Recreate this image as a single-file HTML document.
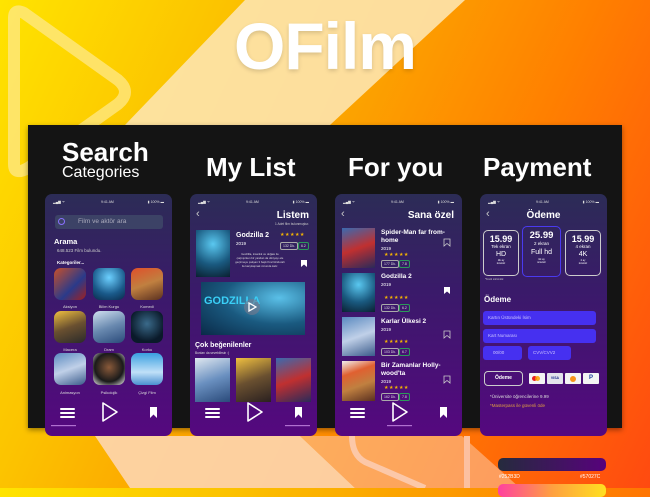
<!DOCTYPE html>
<html><head><meta charset="utf-8"><style>
*{margin:0;padding:0;box-sizing:border-box}
body{width:650px;height:488px;overflow:hidden;position:relative;font-family:"Liberation Sans",sans-serif;background:linear-gradient(115deg,#ffe400 0%,#fcc400 25%,#fca400 45%,#ff8000 68%,#ff4a10 100%)}
.a{position:absolute}
.w{color:#fff}
.ph{position:absolute;top:194px;width:127px;height:242px;border-radius:7px;background:linear-gradient(180deg,#2c2c56 0%,#3a1a6a 40%,#55087f 100%);overflow:hidden;color:#fff}
.st{position:absolute;top:6px;left:0;width:100%;font-size:3.5px;color:#ddd}
.t{position:absolute;white-space:nowrap}
.tile{position:absolute;width:32px;height:32px;border-radius:7px}
.lbl{position:absolute;font-size:4px;color:#ddd;width:40px;text-align:center}
.bdg{position:absolute;font-size:3.5px;border:0.6px solid #aaa;border-radius:2px;padding:1px 2px;color:#ddd}
.bdg.g{border-color:#2c9a5a}
.stars{position:absolute;font-size:5px;color:#f5b400;letter-spacing:0.5px}
.inp{position:absolute;background:#4630f0;border-radius:3px;font-size:4.5px;color:#c8c0ff;padding:4px 0 0 5px}
.plan{position:absolute;border:1.3px solid #ccc;border-radius:5px;text-align:center;color:#fff}
</style></head><body>
<svg class="a" style="left:0;top:0" width="650" height="488">
<polygon points="245,0 465,0 330,125 125,125" fill="#fde4ae" opacity="0.9"/>
<polygon points="95,436 300,436 355,488 130,488" fill="#fdd6b0" opacity="0.9"/>
<polygon points="300,436 462,436 520,488 355,488" fill="#fbc29a" opacity="0.6"/>
<path d="M14,18 Q14,8 24,13 L118,80 Q132,92 118,104 L28,168 Q14,176 14,164 Z" stroke="#fde88a" stroke-width="12" fill="none" stroke-linejoin="round" opacity="0.75"/>
<path d="M352,436 Q352,455 365,462 L425,488" stroke="#fcc8a8" stroke-width="6" fill="none"/>
<rect x="464" y="436" width="6" height="52" fill="#fcc0a0"/>
</svg>
<div class="a w" style="left:0;top:8px;width:650px;text-align:center;font-size:66px;font-weight:bold;text-shadow:0 2px 4px rgba(0,0,0,0.15);letter-spacing:-1px">OFilm</div>
<div class="a" style="left:28px;top:125px;width:594px;height:303px;background:#141414;box-shadow:0 2px 5px rgba(0,0,0,0.4)"></div>
<div class="a w" style="left:62px;top:138px;font-size:26px;line-height:28px;font-weight:bold">Search</div>
<div class="a w" style="left:62px;top:164px;font-size:16px;line-height:18px">Categories</div>
<div class="a w" style="left:206px;top:152px;font-size:26px;font-weight:bold">My List</div>
<div class="a w" style="left:348px;top:152px;font-size:26px;font-weight:bold">For you</div>
<div class="a w" style="left:483px;top:152px;font-size:26px;font-weight:bold">Payment</div>

<!-- Phone 1 -->
<div class="ph" style="left:45px">
<div class="st"><span style="position:absolute;left:8px">▂▄▆ ᯤ</span><span style="position:absolute;left:56px">9:41 AM</span><span style="position:absolute;right:8px">▮ 100% ▬</span></div>
<div class="a" style="left:10px;top:21px;width:108px;height:14px;background:#3c4266;border-radius:3px"></div>
<div class="a" style="left:13px;top:24px;width:7px;height:7px;border:1.3px solid #8a70ff;border-radius:50%"></div>
<div class="t" style="left:33px;top:24px;font-size:6.5px;color:#aab">Film ve aktör ara</div>
<div class="t" style="left:9px;top:43px;font-size:7.5px;font-weight:bold">Arama</div>
<div class="t" style="left:12px;top:54px;font-size:4.5px;color:#ccc">648.523 Film bulundu.</div>
<div class="t" style="left:12px;top:66px;font-size:4.5px;font-weight:bold">Kategoriler...</div>
<div class="tile" style="left:9px;top:74px;background:linear-gradient(135deg,#c8502a,#2a3a8a 60%,#a02020)"></div>
<div class="tile" style="left:48px;top:74px;background:radial-gradient(circle at 50% 30%,#6cd0ff,#1a5a8a 60%,#0a2a4a)"></div>
<div class="tile" style="left:86px;top:74px;background:linear-gradient(160deg,#e0502a,#c08040 50%,#5a3020)"></div>
<div class="lbl" style="left:5px;top:110px">Aksiyon</div><div class="lbl" style="left:44px;top:110px">Bilim Kurgu</div><div class="lbl" style="left:82px;top:110px">Komedi</div>
<div class="tile" style="left:9px;top:117px;background:linear-gradient(160deg,#f0c040,#6a5030 50%,#2a2a2a)"></div>
<div class="tile" style="left:48px;top:117px;background:linear-gradient(160deg,#d0e0f0,#6a8ab0 50%,#2a4a7a)"></div>
<div class="tile" style="left:86px;top:117px;background:radial-gradient(circle at 50% 40%,#3a6a8a,#0a1a2a 70%)"></div>
<div class="lbl" style="left:5px;top:153px">Macera</div><div class="lbl" style="left:44px;top:153px">Dram</div><div class="lbl" style="left:82px;top:153px">Korku</div>
<div class="tile" style="left:9px;top:159px;background:linear-gradient(160deg,#5a8ac0,#c0d0e8 50%,#3a5a8a)"></div>
<div class="tile" style="left:48px;top:159px;background:radial-gradient(circle at 50% 45%,#8a5a3a,#1a1a1a 60%,#f0f0f0)"></div>
<div class="tile" style="left:86px;top:159px;background:linear-gradient(180deg,#3aa0e0,#c0e0f8 60%,#4a90d0)"></div>
<div class="lbl" style="left:5px;top:196px">Animasyon</div><div class="lbl" style="left:44px;top:196px">Psikolojik</div><div class="lbl" style="left:82px;top:196px">Çizgi Film</div>
<svg class="a" style="left:0;top:205px" width="127" height="37"><g fill="#fff"><rect x="15" y="9" width="15" height="2" rx="1"/><rect x="15" y="13" width="15" height="2" rx="1"/><rect x="15" y="17" width="15" height="2" rx="1"/></g><path d="M58,4 L58,22 L72,13 Z" stroke="#fff" stroke-width="1.6" fill="none" stroke-linejoin="round"/><path d="M105,8 L112,8 L112,19 L108.5,15.5 L105,19 Z" fill="#fff"/><rect x="6" y="26" width="25" height="1.2" fill="#b070d0"/></svg>
</div>

<!-- Phone 2 -->
<div class="ph" style="left:190px">
<div class="st"><span style="position:absolute;left:8px">▂▄▆ ᯤ</span><span style="position:absolute;left:56px">9:41 AM</span><span style="position:absolute;right:8px">▮ 100% ▬</span></div>
<div class="t" style="left:6px;top:14px;font-size:11px;color:#ccc">‹</div>
<div class="t" style="right:8px;top:16px;font-size:10px;font-weight:bold">Listem</div>
<div class="t" style="right:8px;top:28px;font-size:3.2px;color:#ccc">1 Adet film bulunmuştur.</div>
<div class="a" style="left:6px;top:36px;width:34px;height:47px;background:radial-gradient(circle at 50% 30%,#5ac8f0,#1a5a80 55%,#0a2030)"></div>
<div class="t" style="left:46px;top:38px;font-size:7px;font-weight:bold">Godzilla 2</div>
<div class="t" style="left:46px;top:47px;font-size:4.5px">2019</div>
<div class="stars" style="left:90px;top:38px">★★★★★</div>
<div class="bdg" style="left:90px;top:48px">132 Dk.</div><div class="bdg g" style="left:108px;top:48px">6.2</div>
<div class="a" style="left:45px;top:58px;width:50px;font-size:2.8px;line-height:4px;color:#ddd;text-align:center">Godzilla, insanlık ve doğası ile çarpışırken bir yandan da dünyayı ele geçirmeye çalışan 3 başlı Kral Ghidorah ile karşılaşmak zorunda kalır.</div>
<svg class="a" style="left:110px;top:65px" width="8" height="9"><path d="M1,1 L7,1 L7,8 L4,5.5 L1,8 Z" fill="#fff"/></svg>
<div class="a" style="left:11px;top:88px;width:104px;height:53px;background:radial-gradient(ellipse at 75% 30%,#5ac0e8,#1a5a80 50%,#0a2a48)"></div>
<div class="t" style="left:14px;top:101px;font-size:11px;font-weight:bold;color:#3ad0f8">GODZILLA</div>
<div class="a" style="left:54px;top:105px;width:16px;height:16px;border-radius:50%;background:rgba(120,120,140,0.6)"></div>
<svg class="a" style="left:57px;top:108px" width="10" height="10"><path d="M2,1 L2,9 L9,5 Z" stroke="#fff" stroke-width="1.3" fill="none"/></svg>
<div class="t" style="left:5px;top:148px;font-size:7px;font-weight:bold">Çok beğenilenler</div>
<div class="t" style="left:5px;top:157px;font-size:3.2px;color:#ddd">Bunları da sevebilirsin :)</div>
<div class="a" style="left:5px;top:164px;width:35px;height:44px;background:linear-gradient(160deg,#e0e8f0,#6a90c0 50%,#2a4a7a)"></div>
<div class="a" style="left:46px;top:164px;width:35px;height:44px;background:linear-gradient(160deg,#f0c040,#6a5030 50%,#2a2020)"></div>
<div class="a" style="left:86px;top:164px;width:35px;height:44px;background:linear-gradient(160deg,#3a6ab0,#c03030 50%,#2a2a5a)"></div>
<svg class="a" style="left:0;top:205px" width="127" height="37"><g fill="#fff"><rect x="15" y="9" width="15" height="2" rx="1"/><rect x="15" y="13" width="15" height="2" rx="1"/><rect x="15" y="17" width="15" height="2" rx="1"/></g><path d="M58,4 L58,22 L72,13 Z" stroke="#fff" stroke-width="1.6" fill="none" stroke-linejoin="round"/><path d="M105,8 L112,8 L112,19 L108.5,15.5 L105,19 Z" fill="#fff"/><rect x="95" y="26" width="25" height="1.2" fill="#b070d0"/></svg>
</div>

<!-- Phone 3 -->
<div class="ph" style="left:335px">
<div class="st"><span style="position:absolute;left:8px">▂▄▆ ᯤ</span><span style="position:absolute;left:56px">9:41 AM</span><span style="position:absolute;right:8px">▮ 100% ▬</span></div>
<div class="t" style="left:6px;top:14px;font-size:11px;color:#ccc">‹</div>
<div class="t" style="right:8px;top:16px;font-size:10px;font-weight:bold">Sana özel</div>
<div class="a" style="left:7px;top:34px;width:33px;height:40px;background:linear-gradient(160deg,#3a6ab0,#c03030 50%,#2a2a5a)"></div>
<div class="t" style="left:46px;top:35px;font-size:6.5px;font-weight:bold;line-height:8px">Spider-Man far from-<br>home</div>
<div class="t" style="left:46px;top:52px;font-size:4.5px">2019</div><div class="stars" style="left:49px;top:58px">★★★★★</div>
<div class="bdg" style="left:46px;top:66px">177 Dk.</div><div class="bdg g" style="left:64px;top:66px">7.8</div>
<div class="a" style="left:7px;top:79px;width:33px;height:39px;background:radial-gradient(circle at 50% 30%,#5ac8f0,#1a5a80 55%,#0a2030)"></div>
<div class="t" style="left:46px;top:79px;font-size:6.5px;font-weight:bold">Godzilla 2</div>
<div class="t" style="left:46px;top:88px;font-size:4.5px">2019</div><div class="stars" style="left:49px;top:101px">★★★★★</div>
<div class="bdg" style="left:46px;top:110px">132 Dk.</div><div class="bdg g" style="left:64px;top:110px">6.2</div>
<div class="a" style="left:7px;top:123px;width:33px;height:39px;background:linear-gradient(160deg,#5a8ac0,#c0d0e8 50%,#3a5a8a)"></div>
<div class="t" style="left:46px;top:124px;font-size:6.5px;font-weight:bold">Karlar Ülkesi 2</div>
<div class="t" style="left:46px;top:133px;font-size:4.5px">2019</div><div class="stars" style="left:49px;top:145px">★★★★★</div>
<div class="bdg" style="left:46px;top:154px">103 Dk.</div><div class="bdg g" style="left:64px;top:154px">6.7</div>
<div class="a" style="left:7px;top:167px;width:33px;height:40px;background:linear-gradient(160deg,#f0f0f0,#e06030 30%,#c08040 60%,#5a3020)"></div>
<div class="t" style="left:46px;top:168px;font-size:6.5px;font-weight:bold;line-height:8px">Bir Zamanlar Holly-<br>wood'ta</div>
<div class="t" style="left:46px;top:185px;font-size:4.5px">2019</div><div class="stars" style="left:49px;top:191px">★★★★★</div>
<div class="bdg" style="left:46px;top:199px">162 Dk.</div><div class="bdg g" style="left:64px;top:199px">7.8</div>
<svg class="a" style="left:108px;top:44px" width="8" height="9"><path d="M1,1 L7,1 L7,8 L4,5.5 L1,8 Z" stroke="#ccc" stroke-width="0.8" fill="none"/></svg>
<svg class="a" style="left:108px;top:92px" width="8" height="9"><path d="M1,1 L7,1 L7,8 L4,5.5 L1,8 Z" fill="#fff"/></svg>
<svg class="a" style="left:108px;top:136px" width="8" height="9"><path d="M1,1 L7,1 L7,8 L4,5.5 L1,8 Z" stroke="#ccc" stroke-width="0.8" fill="none"/></svg>
<svg class="a" style="left:108px;top:181px" width="8" height="9"><path d="M1,1 L7,1 L7,8 L4,5.5 L1,8 Z" stroke="#ccc" stroke-width="0.8" fill="none"/></svg>
<svg class="a" style="left:0;top:205px" width="127" height="37"><g fill="#fff"><rect x="15" y="9" width="15" height="2" rx="1"/><rect x="15" y="13" width="15" height="2" rx="1"/><rect x="15" y="17" width="15" height="2" rx="1"/></g><path d="M58,4 L58,22 L72,13 Z" stroke="#fff" stroke-width="1.6" fill="none" stroke-linejoin="round"/><path d="M105,8 L112,8 L112,19 L108.5,15.5 L105,19 Z" fill="#fff"/><rect x="52" y="26" width="25" height="1.2" fill="#b070d0"/></svg>
</div>

<!-- Phone 4 -->
<div class="ph" style="left:480px">
<div class="st"><span style="position:absolute;left:8px">▂▄▆ ᯤ</span><span style="position:absolute;left:56px">9:41 AM</span><span style="position:absolute;right:8px">▮ 100% ▬</span></div>
<div class="t" style="left:6px;top:14px;font-size:11px;color:#ccc">‹</div>
<div class="a" style="left:0;top:16px;width:127px;text-align:center;font-size:10px;font-weight:bold">Ödeme</div>
<div class="plan" style="left:3px;top:36px;width:36px;height:46px"><div style="font-size:9px;font-weight:bold;margin-top:3px">15.99</div><div style="font-size:4.5px">Tek ekran</div><div style="font-size:7px;margin-top:2px">HD</div><div style="font-size:2.5px;margin-top:1px">1ik ay<br>ücretsiz</div></div>
<div class="plan" style="left:42px;top:32px;width:39px;height:51px;border-color:#4a3af0"><div style="font-size:9.5px;font-weight:bold;margin-top:3px">25.99</div><div style="font-size:4.5px">2 ekran</div><div style="font-size:7px;margin-top:3px">Full hd</div><div style="font-size:2.5px;margin-top:2px">1ik ay<br>ücretsiz</div></div>
<div class="plan" style="left:85px;top:36px;width:36px;height:46px"><div style="font-size:9px;font-weight:bold;margin-top:3px">15.99</div><div style="font-size:4.5px">4 ekran</div><div style="font-size:7px;margin-top:2px">4K</div><div style="font-size:2.5px;margin-top:1px">2 ay<br>ücretsiz</div></div>
<div class="t" style="left:5px;top:84px;font-size:2.5px;color:#ccc">*Kısıtlı sürümdür.</div>
<div class="t" style="left:4px;top:101px;font-size:8px;font-weight:bold">Ödeme</div>
<div class="inp" style="left:3px;top:117px;width:113px;height:14px">Kartın Üstündeki İsim</div>
<div class="inp" style="left:3px;top:135px;width:113px;height:14px">Kart Numarası</div>
<div class="inp" style="left:3px;top:152px;width:39px;height:14px;padding-left:10px">00/00</div>
<div class="inp" style="left:48px;top:152px;width:43px;height:14px">CVV/CVV2</div>
<div class="a" style="left:4px;top:177px;width:39px;height:15px;border:1px solid #ccc;border-radius:4px;font-size:5px;font-weight:bold;text-align:center;padding-top:3px">Ödeme</div>
<div class="a" style="left:49px;top:179px;width:16px;height:11px;background:#f4f4f4;border-radius:1px"><div class="a" style="left:3px;top:3px;width:5px;height:5px;border-radius:50%;background:#e82020"></div><div class="a" style="left:6px;top:3px;width:5px;height:5px;border-radius:50%;background:#f8a000;opacity:.85"></div></div>
<div class="a" style="left:67px;top:179px;width:16px;height:11px;background:#e4e4ec;border-radius:1px;font-size:3.5px;color:#1a2a8a;font-weight:bold;text-align:center;padding-top:3px">VISA</div>
<div class="a" style="left:85px;top:179px;width:16px;height:11px;background:#f4f4f4;border-radius:1px"><div class="a" style="left:5px;top:2.5px;width:6px;height:6px;border-radius:50%;background:#f7931a"></div></div>
<div class="a" style="left:103px;top:179px;width:16px;height:11px;background:#f4f4f4;border-radius:1px;font-size:6px;color:#1a3a9a;font-weight:bold;text-align:center;padding-top:2px">P</div>
<div class="t" style="left:10px;top:200px;font-size:4.5px;color:#ddd">*Üniversite öğrencilerine 9.99</div>
<div class="t" style="left:10px;top:209px;font-size:4.5px;color:#e0a040">*Masterpass ile güvenli öde</div>
</div>

<div class="a" style="left:498px;top:458px;width:108px;height:13px;border-radius:5px;background:linear-gradient(90deg,#252b3d,#57027c)"></div>
<div class="t" style="left:499px;top:474px;font-size:5px;color:#fff">#252B3D</div>
<div class="t" style="left:580px;top:474px;font-size:5px;color:#fff">#57027C</div>
<div class="a" style="left:498px;top:484px;width:108px;height:13px;border-radius:5px;background:linear-gradient(90deg,#ff40a0,#ffa040,#ffe020)"></div>
</body></html>
